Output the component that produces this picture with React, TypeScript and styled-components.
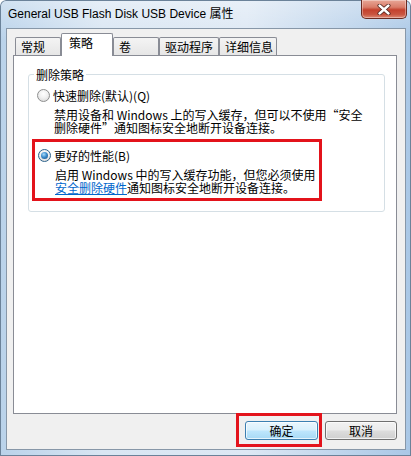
import React from "react";
import styled, { createGlobalStyle } from "styled-components";

const GlobalStyle = createGlobalStyle`
  html, body { margin: 0; padding: 0; background: #ffffff; }
  body {
    width: 411px;
    height: 456px;
    overflow: hidden;
    font-family: "Noto Sans CJK SC", "Noto Sans", sans-serif;
  }
  * { box-sizing: border-box; }
`;

const Window = styled.div`
  width: 411px;
  height: 456px;
  display: flex;
  flex-direction: column;
  padding: 0 5px 6px 6px;
  border-radius: 6px 6px 0 0;
  background:
    linear-gradient(to bottom, rgba(255, 255, 255, 0.35), rgba(255, 255, 255, 0) 40px),
    linear-gradient(to right, #b9d2ea 0%, #d9e6f3 25%, #dde8f4 60%, #a9c7e6 100%);
  box-shadow: inset 0 0 0 1px #6b8299;
`;

const TitleBar = styled.div`
  height: 28px;
  display: flex;
  align-items: flex-start;
  justify-content: space-between;
`;

const Title = styled.div`
  padding: 7px 0 0 2px;
  font-family: "Liberation Sans", "Noto Sans CJK SC", sans-serif;
  font-size: 12px;
  line-height: 15px;
  color: #000;
`;

const CloseButton = styled.div`
  width: 46px;
  height: 19px;
  margin-right: -1px;
  display: flex;
  align-items: center;
  justify-content: center;
  border: 1px solid #6a2b22;
  border-top: none;
  border-radius: 0 0 5px 5px;
  background: linear-gradient(
    to bottom,
    #e8a797 0%,
    #d97c69 40%,
    #c4412d 55%,
    #c95540 80%,
    #de8a74 100%
  );
  box-shadow: inset 0 0 0 1px rgba(255, 255, 255, 0.35);
`;

const Client = styled.div`
  flex: 1;
  display: flex;
  flex-direction: column;
  background: #f0f0f0;
  border: 1px solid #8797a8;
  padding: 4px 8px 9px 6px;
`;

const TabStrip = styled.div`
  height: 23px;
  display: flex;
  align-items: flex-end;
  padding-left: 2px;
  margin-bottom: -1px;
  position: relative;
  z-index: 1;
`;

const Tab = styled.div<{ $active: boolean; $w: number }>`
  width: ${(p) => p.$w}px;
  height: ${(p) => (p.$active ? 23 : 18)}px;
  margin-bottom: ${(p) => (p.$active ? 0 : 1)}px;
  display: flex;
  align-items: center;
  padding: 0 0 ${(p) => (p.$active ? 5 : 0)}px ${(p) => (p.$active ? 7 : 5)}px;
  border: 1px solid #898c95;
  border-bottom: none;
  border-radius: 2px 2px 0 0;
  background: ${(p) =>
    p.$active ? "#ffffff" : "linear-gradient(to bottom, #f4f4f4, #e6e6e6)"};
  font-size: 12px;
  line-height: 14px;
  color: #000;
  white-space: nowrap;
`;

const Panel = styled.div`
  flex: 1;
  background: #ffffff;
  border: 1px solid #898c95;
  padding: 12px 11px 0 14px;
`;

const GroupBox = styled.fieldset`
  margin: 0;
  min-width: 0;
  border: 1px solid #d5dfe5;
  border-radius: 3px;
  padding: 0 8px 10px 8px;
`;

const Legend = styled.legend`
  margin-left: -3px;
  padding: 0 2px;
  font-size: 12px;
  line-height: 13px;
  color: #000;
`;

const Option = styled.div<{ $first?: boolean }>`
  display: flex;
  flex-direction: column;
  margin-top: ${(p) => (p.$first ? 8 : 0)}px;
`;

const RadioRow = styled.div`
  display: flex;
  align-items: center;
  gap: 3px;
  height: 13px;
  font-size: 12px;
  line-height: 13px;
  color: #000;
  white-space: nowrap;
`;

const Radio = styled.span<{ $checked: boolean }>`
  position: relative;
  flex: none;
  width: 13px;
  height: 13px;
  border-radius: 50%;
  border: 1px solid ${(p) => (p.$checked ? "#2c628b" : "#8e8f8f")};
  background: radial-gradient(circle at 50% 35%, #ffffff 0%, #f1f1f1 45%, #d2d2d2 100%);
  &::after {
    content: "";
    display: ${(p) => (p.$checked ? "block" : "none")};
    position: absolute;
    inset: 2px;
    border-radius: 50%;
    background: radial-gradient(circle at 40% 35%, #a9dcfa 0%, #3b8ccd 45%, #16497a 100%);
  }
`;

const Description = styled.div`
  margin-top: 6px;
  padding-left: 17px;
  font-size: 12px;
  line-height: 13px;
  color: #000;
  white-space: nowrap;
`;

const Highlight = styled.div`
  width: 290px;
  margin: 5px 0 0 -5px;
  border: 3px solid #e3131b;
  padding: 7px 0 4px 3px;
`;

const Link = styled.span`
  color: #0066cc;
  text-decoration: underline;
`;

const ButtonRow = styled.div`
  display: flex;
  justify-content: flex-end;
  gap: 7px;
  margin-top: 7px;
`;

const Marked = styled.span`
  position: relative;
  display: flex;
  &::after {
    content: "";
    position: absolute;
    top: -8px;
    left: -9px;
    right: -4px;
    bottom: -7px;
    border: 3px solid #e3131b;
    pointer-events: none;
  }
`;

const DialogButton = styled.div<{ $default?: boolean; $w: number }>`
  width: ${(p) => p.$w}px;
  height: 19px;
  display: flex;
  align-items: center;
  justify-content: center;
  border-radius: 3px;
  border: 1px solid ${(p) => (p.$default ? "#3c7fb1" : "#707070")};
  background: ${(p) =>
    p.$default
      ? "linear-gradient(to bottom, #eaf6fd 0%, #d9f0fc 48%, #bee6fd 52%, #a7d9f5 100%)"
      : "linear-gradient(to bottom, #f2f2f2 0%, #ebebeb 48%, #dddddd 52%, #cfcfcf 100%)"};
  box-shadow: inset 0 0 0 1px rgba(255, 255, 255, 0.7);
  font-size: 12px;
  line-height: 14px;
  color: #000;
`;

const tabs = [
  { label: "常规", w: 46 },
  { label: "策略", w: 52, active: true },
  { label: "卷", w: 46 },
  { label: "驱动程序", w: 60 },
  { label: "详细信息", w: 58 },
];

export default function App() {
  return (
    <>
      <GlobalStyle />
      <Window>
        <TitleBar>
          <Title>General USB Flash Disk USB Device 属性</Title>
          <CloseButton>
            <svg width="14" height="11" viewBox="0 0 14 11">
              <path d="M2.5 1.5 L11.5 9.5 M11.5 1.5 L2.5 9.5" stroke="#4a1f18" strokeWidth="4" strokeLinecap="round" />
              <path d="M2.5 1.5 L11.5 9.5 M11.5 1.5 L2.5 9.5" stroke="#ffffff" strokeWidth="2.4" strokeLinecap="round" />
            </svg>
          </CloseButton>
        </TitleBar>
        <Client>
          <TabStrip>
            {tabs.map((t) => (
              <Tab key={t.label} $active={!!t.active} $w={t.w}>
                {t.label}
              </Tab>
            ))}
          </TabStrip>
          <Panel>
            <GroupBox>
              <Legend>删除策略</Legend>
              <Option $first>
                <RadioRow>
                  <Radio $checked={false} />
                  快速删除(默认)(Q)
                </RadioRow>
                <Description>
                  禁用设备和 Windows 上的写入缓存，但可以不使用“安全
                  <br />
                  删除硬件”通知图标安全地断开设备连接。
                </Description>
              </Option>
              <Highlight>
                <Option>
                  <RadioRow>
                    <Radio $checked />
                    更好的性能(B)
                  </RadioRow>
                  <Description>
                    启用 Windows 中的写入缓存功能，但您必须使用
                    <br />
                    <Link>安全删除硬件</Link>通知图标安全地断开设备连接。
                  </Description>
                </Option>
              </Highlight>
            </GroupBox>
          </Panel>
          <ButtonRow>
            <Marked>
              <DialogButton $default $w={73}>确定</DialogButton>
            </Marked>
            <DialogButton $w={72}>取消</DialogButton>
          </ButtonRow>
        </Client>
      </Window>
    </>
  );
}
